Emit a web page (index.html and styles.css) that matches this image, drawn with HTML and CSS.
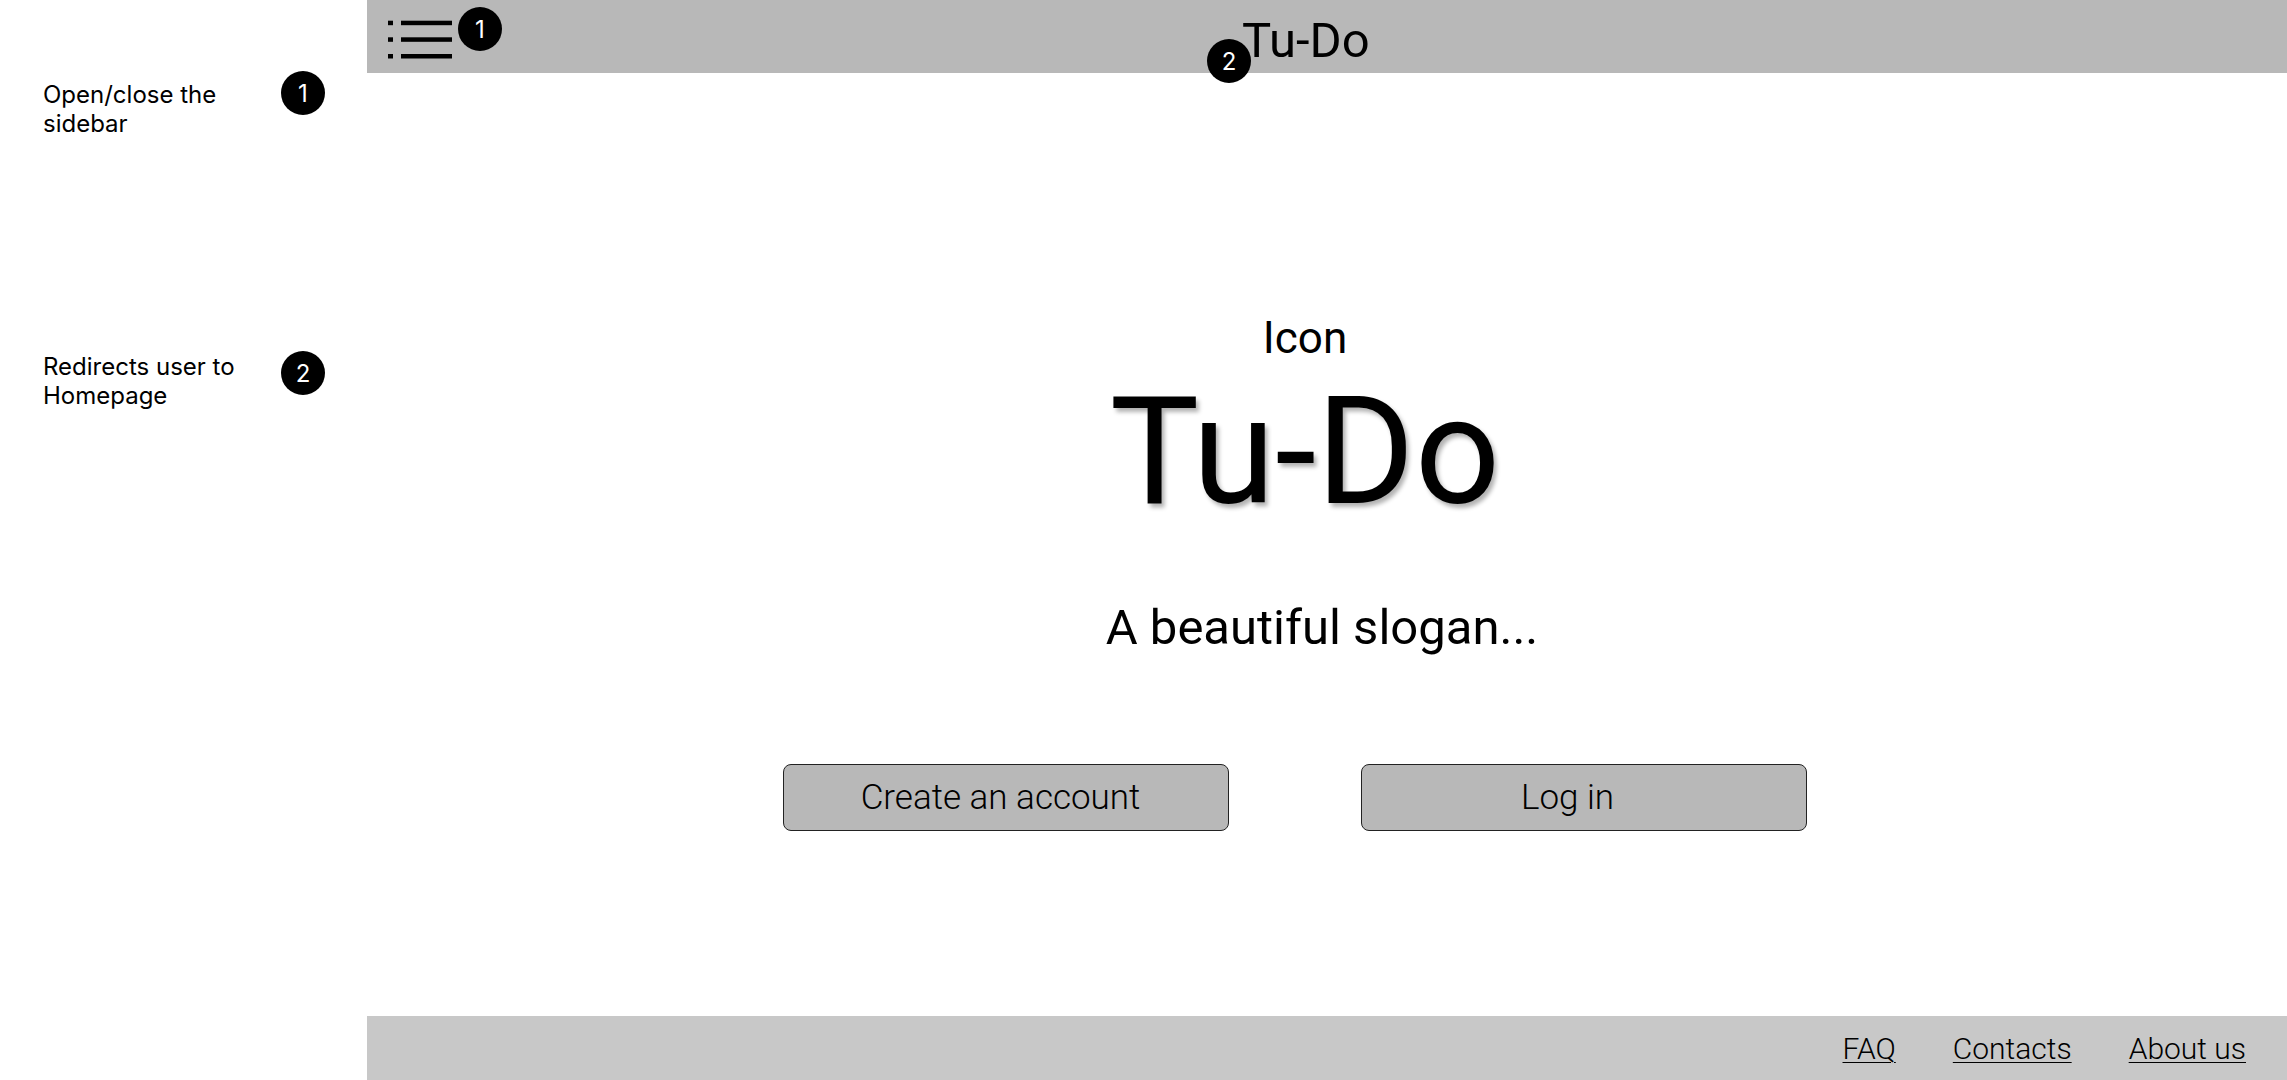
FILE: index.html
```html
<!DOCTYPE html>
<html lang="en">
<head>
<meta charset="utf-8">
<title>Tu-Do</title>
<link rel="stylesheet" href="styles.css">
</head>
<body>
<div class="page">
  <aside class="notes">
    <div class="note note-first">
      <p class="note-text">Open/close the sidebar</p>
      <span class="badge">1</span>
    </div>
    <div class="note note-second">
      <p class="note-text note-text-tight">Redirects user to Homepage</p>
      <span class="badge">2</span>
    </div>
  </aside>
  <div class="main">
    <header class="topbar">
      <svg class="menu-icon" width="64" height="42" viewBox="0 0 64 42" aria-hidden="true">
        <rect x="0" y="1.7" width="5" height="4.5" fill="#000"/>
        <rect x="0" y="18.3" width="5" height="4.5" fill="#000"/>
        <rect x="0" y="35" width="5" height="4.5" fill="#000"/>
        <rect x="13" y="1.7" width="51" height="4.5" fill="#000"/>
        <rect x="13" y="18.3" width="51" height="4.5" fill="#000"/>
        <rect x="13" y="35" width="51" height="4.5" fill="#000"/>
      </svg>
      <a class="brand" href="#">Tu-Do</a>
      <span class="badge badge-menu">1</span>
      <span class="badge badge-brand">2</span>
    </header>
    <section class="hero">
      <div class="hero-icon">Icon</div>
      <h1 class="hero-title">Tu-Do</h1>
      <p class="slogan">A beautiful slogan...</p>
      <div class="actions">
        <button class="btn btn-create">Create an account</button>
        <button class="btn btn-login">Log in</button>
      </div>
    </section>
    <footer class="footer">
      <a href="#" class="footer-link">FAQ</a>
      <a href="#" class="footer-link">Contacts</a>
      <a href="#" class="footer-link">About us</a>
    </footer>
  </div>
</div>
</body>
</html>
```
FILE: styles.css
```css
* { box-sizing: border-box; }
html, body { margin: 0; padding: 0; }
body {
  background: #fff;
  color: #000;
  font-family: Roboto, "Liberation Sans", sans-serif;
  width: 2287px;
  height: 1080px;
  overflow: hidden;
}
.page {
  display: flex;
  height: 1080px;
}
.notes {
  width: 367px;
  flex: none;
  padding-left: 43px;
  font-family: Inter, "Noto Sans", sans-serif;
}
.note {
  display: flex;
  align-items: flex-start;
  gap: 33px;
}
.note-first { margin-top: 71px; }
.note-second { margin-top: 213px; }
.note-text {
  margin: 9px 0 0;
  width: 205px;
  font-size: 24px;
  line-height: 29px;
}
.note-text-tight { margin-top: 1px; }
.badge {
  width: 44px;
  height: 44px;
  border-radius: 50%;
  background: #000;
  color: #fff;
  font-family: Inter, "Noto Sans", sans-serif;
  font-size: 24px;
  display: flex;
  align-items: center;
  justify-content: center;
  flex: none;
}
.main {
  flex: 1;
  display: flex;
  flex-direction: column;
  height: 1080px;
}
.topbar {
  position: relative;
  height: 73px;
  flex: none;
  background: #b8b8b8;
  display: flex;
  align-items: flex-start;
  padding-left: 21px;
}
.menu-icon {
  margin-top: 19px;
  flex: none;
}
.brand {
  margin-left: 790px;
  margin-top: 12px;
  font-size: 49px;
  color: #000;
  text-decoration: none;
  line-height: normal;
}
.badge-menu {
  position: absolute;
  left: 91px;
  top: 7px;
}
.badge-brand {
  position: absolute;
  left: 840px;
  top: 39px;
}
.hero {
  flex: 1;
  display: flex;
  flex-direction: column;
  align-items: center;
  padding-top: 239px;
  padding-right: 44px;
}
.hero-icon {
  font-size: 44px;
  line-height: normal;
}
.hero-title {
  margin: 0;
  font-size: 150px;
  font-weight: 400;
  line-height: normal;
  text-shadow: 3px 4px 4px rgba(0, 0, 0, 0.3);
}
.slogan {
  margin: 59px 0 0 34px;
  font-size: 49px;
  line-height: normal;
}
.actions {
  margin-top: 108px;
  display: flex;
  gap: 132px;
  margin-left: -20px;
}
.btn {
  width: 446px;
  height: 67px;
  background: #b8b8b8;
  border: 1px solid #222;
  border-radius: 8px;
  font-family: Roboto, "Liberation Sans", sans-serif;
  font-weight: 300;
  font-size: 35px;
  color: #000;
  padding: 0;
}
.btn-create { padding-right: 11px; }
.btn-login { padding-right: 33px; }
.footer {
  height: 64px;
  flex: none;
  background: #c8c8c8;
  display: flex;
  align-items: center;
  justify-content: flex-end;
  gap: 57px;
  padding-right: 41px;
}
.footer-link {
  font-size: 30px;
  font-weight: 300;
  color: #000;
  text-decoration: underline;
  text-decoration-thickness: 1px;
  text-underline-offset: 3px;
  line-height: normal;
}
```
